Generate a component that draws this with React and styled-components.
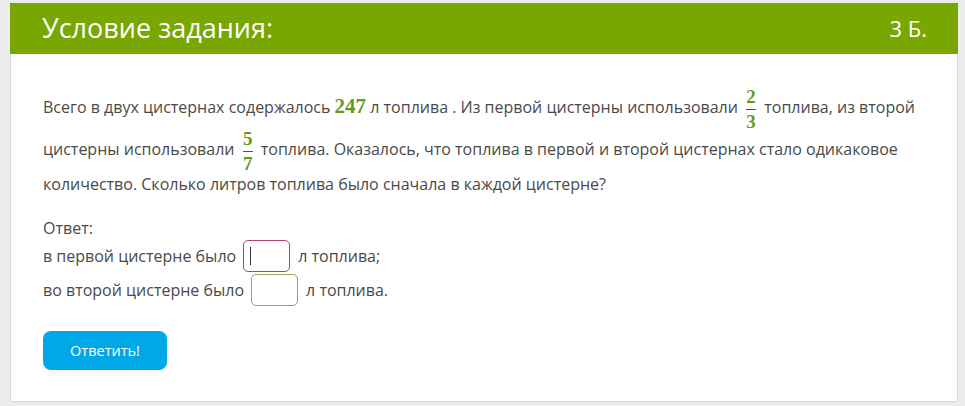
import React from "react";
import styled, { createGlobalStyle } from "styled-components";

const Global = createGlobalStyle`
  html, body { margin: 0; padding: 0; background: #ececec; }
  body { font-family: "Open Sans", "Liberation Sans", sans-serif; }
`;

const Page = styled.div`
  padding: 3px 6px 5px 10px;
`;

const Card = styled.section`
  width: 948px;
  box-sizing: border-box;
  background: #fff;
  border: 1px solid #d9d9d9;
  border-top: none;
`;

const Header = styled.header`
  height: 51px;
  background: #77a700;
  color: #fff;
  display: flex;
  align-items: center;
  justify-content: space-between;
  padding: 0 31px 2px 32px;
  margin: 0 -1px;
  box-sizing: border-box;
`;

const Title = styled.h2`
  margin: 0;
  font-size: 27px;
  font-weight: 400;
`;

const Score = styled.span`
  font-size: 22px;
`;

const Body = styled.div`
  padding: 34px 30px 31px 32px;
  color: #4a4a4a;
  font-size: 16px;
`;

const Problem = styled.p`
  margin: 0 0 20px;
  line-height: 24px;
`;

const Num = styled.span`
  font-family: "Liberation Serif", "DejaVu Serif", serif;
  font-weight: 700;
  color: #66991c;
  font-size: 21px;
`;

const Frac = styled.span`
  display: inline-flex;
  flex-direction: column;
  align-items: center;
  vertical-align: middle;
  margin: 0 4px;
  font-family: "Liberation Serif", "DejaVu Serif", serif;
  font-weight: 700;
  color: #66991c;
  font-size: 19px;
  line-height: 17px;
`;

const Bar = styled.span`
  display: block;
  width: 10px;
  height: 1px;
  background: #555;
  margin: 4px 0 3px;
`;

const AnswerLabel = styled.div`
  line-height: 24px;
`;

const Rows = styled.div`
  display: flex;
  flex-direction: column;
  gap: 2px;
`;

const Row = styled.div`
  display: flex;
  align-items: center;
  height: 32px;
`;

const Box = styled.input`
  width: 47px;
  height: 32px;
  box-sizing: border-box;
  margin: 0 8px 0 7px;
  border: 1px solid ${(p) => p.$color};
  border-radius: 5px;
  background: #fff;
  font: inherit;
  padding: 0 6px;
  outline: none;
`;

const Caret = styled.span`
  position: absolute;
  left: 14px;
  top: 7px;
  width: 1px;
  height: 18px;
  background: #333;
`;

const BoxWrap = styled.span`
  position: relative;
  display: inline-flex;
`;

const Button = styled.button`
  margin-top: 25px;
  width: 124px;
  height: 39px;
  border: none;
  border-radius: 8px;
  background: #00a8e8;
  color: #fff;
  font-family: "Open Sans", "Liberation Sans", sans-serif;
  font-size: 14.5px;
  cursor: pointer;
`;

const Fraction = ({ n, d }) => (
  <Frac>
    <span>{n}</span>
    <Bar />
    <span>{d}</span>
  </Frac>
);

export default function App() {
  return (
    <>
      <Global />
      <Page>
        <Card>
          <Header>
            <Title>Условие задания:</Title>
            <Score>3 Б.</Score>
          </Header>
          <Body>
            <Problem>
              Всего в двух цистернах содержалось <Num>247</Num> л топлива . Из первой цистерны
              использовали <Fraction n="2" d="3" /> топлива, из второй цистерны использовали{" "}
              <Fraction n="5" d="7" /> топлива. Оказалось, что топлива в первой и второй цистернах
              стало одикаковое количество. Сколько литров топлива было сначала в каждой цистерне?
            </Problem>
            <AnswerLabel>Ответ:</AnswerLabel>
            <Rows>
              <Row>
                в первой цистерне было
                <BoxWrap>
                  <Box $color="#b8407a" />
                  <Caret />
                </BoxWrap>
                л топлива;
              </Row>
              <Row>
                во второй цистерне было
                <Box $color="#8eab52" />
                л топлива.
              </Row>
            </Rows>
            <Button>Ответить!</Button>
          </Body>
        </Card>
      </Page>
    </>
  );
}
